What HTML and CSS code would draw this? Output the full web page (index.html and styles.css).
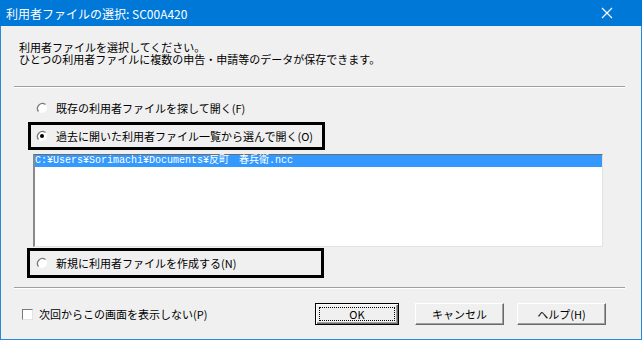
FILE: index.html
```html
<!DOCTYPE html>
<html lang="ja">
<head>
  <meta charset="UTF-8">
  <title>利用者ファイルの選択: SC00A420</title>
  <link rel="stylesheet" href="styles.css">
</head>
<body>
  <div class="window">
    <div class="titlebar">
      <span class="title">利用者ファイルの選択: SC00A420</span>
      <svg class="close" width="12" height="12" viewBox="0 0 12 12">
        <path d="M1 1 L11 11 M11 1 L1 11" stroke="#fff" stroke-width="1.2" fill="none"/>
      </svg>
    </div>
    <div class="content">
      <div class="intro">
        <p>利用者ファイルを選択してください。</p>
        <p>ひとつの利用者ファイルに複数の申告・申請等のデータが保存できます。</p>
      </div>
      <div class="sep"></div>
      <div class="options">
        <div class="option first">
          <svg class="radio" width="12" height="12" viewBox="0 0 12 12">
            <circle cx="6" cy="6" r="5" fill="#fff"/>
            <path d="M9.5 2.5 A5 5 0 0 0 2.5 9.5" stroke="#7a7a7a" stroke-width="1.3" fill="none"/>
          </svg>
          <span>既存の利用者ファイルを探して開く(F)</span>
        </div>
        <div class="frame frame-recent">
          <div class="option">
            <svg class="radio" width="12" height="12" viewBox="0 0 12 12">
              <circle cx="6" cy="6" r="5" fill="#fff"/>
              <path d="M9.5 2.5 A5 5 0 0 0 2.5 9.5" stroke="#7a7a7a" stroke-width="1.3" fill="none"/>
              <circle cx="6" cy="6" r="2" fill="#000"/>
            </svg>
            <span>過去に開いた利用者ファイル一覧から選んで開く(O)</span>
          </div>
        </div>
        <div class="listbox">
          <div class="row selected">C:¥Users¥Sorimachi¥Documents¥反町　春兵衛.ncc</div>
        </div>
        <div class="frame frame-new">
          <div class="option">
            <svg class="radio" width="12" height="12" viewBox="0 0 12 12">
              <circle cx="6" cy="6" r="5" fill="#fff"/>
              <path d="M9.5 2.5 A5 5 0 0 0 2.5 9.5" stroke="#7a7a7a" stroke-width="1.3" fill="none"/>
            </svg>
            <span>新規に利用者ファイルを作成する(N)</span>
          </div>
        </div>
      </div>
      <div class="sep sep-bottom"></div>
      <div class="footer">
        <div class="check">
          <span class="checkbox"></span>
          <span>次回からこの画面を表示しない(P)</span>
        </div>
        <div class="buttons">
          <div class="btn btn-default"><span class="focus">OK</span></div>
          <div class="btn btn-cancel">キャンセル</div>
          <div class="btn btn-help">ヘルプ(H)</div>
        </div>
      </div>
    </div>
  </div>
</body>
</html>
```

FILE: styles.css
```css
* {
  box-sizing: border-box;
}
body {
  margin: 0;
  background: #ffffff;
  font-family: "Noto Sans CJK JP", "Noto Sans", sans-serif;
  font-size: 11px;
  color: #000000;
}
.window {
  width: 642px;
  height: 340px;
  background: #f0f0f0;
  border: 1px solid #2a88d8;
  border-top: none;
  display: flex;
  flex-direction: column;
}
.titlebar {
  height: 26px;
  background: #0078d7;
  color: #ffffff;
  font-size: 12px;
  display: flex;
  align-items: center;
  justify-content: space-between;
  padding: 0 29px 0 6px;
  margin: 0 -1px;
}
.content {
  padding: 0 16px 0 13px;
}
.intro {
  margin-top: 15px;
  padding-left: 5px;
}
.intro p {
  margin: 0;
  line-height: 12px;
}
.sep {
  margin-top: 21px;
  height: 2px;
  border-top: 1px solid #a0a0a0;
  border-bottom: 1px solid #ffffff;
}
.options {
  display: flex;
  flex-direction: column;
}
.option {
  display: flex;
  align-items: center;
  height: 16px;
  line-height: 16px;
}
.option .radio {
  margin-right: 8px;
  flex: none;
}
.option.first {
  margin-top: 12px;
  padding-left: 22px;
}
.frame {
  border: 3px solid #000000;
  display: flex;
  align-items: center;
  padding-left: 5px;
}
.frame-recent {
  margin: 6px 0 0 14px;
  width: 297px;
  height: 28px;
}
.listbox {
  margin: 4px 0 0 19px;
  width: 570px;
  height: 93px;
  background: #ffffff;
  border-top: 1px solid #6d6d6d;
  border-left: 2px solid #8a8a8a;
  border-right: 1px solid #e3e3e3;
  border-bottom: 1px solid #e3e3e3;
}
.row {
  height: 12px;
  line-height: 12px;
  font-family: "Liberation Mono", "Noto Sans CJK JP", monospace;
  font-size: 10px;
  white-space: nowrap;
}
.row.selected {
  background: #3399ff;
  color: #ffffff;
}
.frame-new {
  margin: 1px 0 0 13px;
  width: 297px;
  height: 30px;
  padding-left: 6px;
}
.sep-bottom {
  margin-top: 9px;
}
.footer {
  margin-top: 14px;
  display: flex;
  align-items: center;
  justify-content: space-between;
  padding: 0 19px 0 8px;
}
.check {
  display: flex;
  align-items: center;
}
.checkbox {
  width: 11px;
  height: 11px;
  background: #ffffff;
  border-top: 1px solid #7a7a7a;
  border-left: 1px solid #7a7a7a;
  border-right: 1px solid #e3e3e3;
  border-bottom: 1px solid #e3e3e3;
  margin-right: 6px;
}
.buttons {
  display: flex;
  gap: 16px;
}
.btn {
  height: 22px;
  width: 89px;
  display: flex;
  align-items: center;
  justify-content: center;
  background: #f0f0f0;
  border-top: 1px solid #ffffff;
  border-left: 1px solid #ffffff;
  border-right: 1px solid #696969;
  border-bottom: 1px solid #696969;
  box-shadow: inset -1px -1px 0 #a0a0a0;
}
.btn-default {
  width: 84px;
  border: 1px solid #000000;
  box-shadow: inset 1px 1px 0 #ffffff, inset -1px -1px 0 #696969, inset -2px -2px 0 #a0a0a0;
  padding: 3px;
}
.btn-default .focus {
  flex: 1;
  height: 100%;
  border: 1px dotted #000000;
  display: flex;
  align-items: center;
  justify-content: center;
}
.btn-help {
  margin-left: -3px;
}
```
